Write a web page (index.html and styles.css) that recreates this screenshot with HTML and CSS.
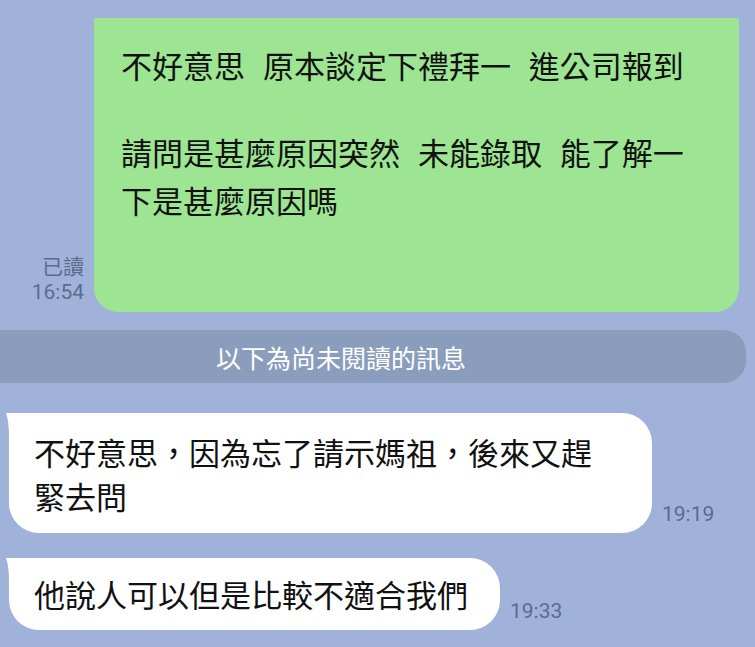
FILE: index.html
```html
<!DOCTYPE html>
<html lang="zh-Hant">
<head>
    <meta charset="UTF-8">
    <meta name="viewport" content="width=device-width, initial-scale=1.0">
    <title>聊天</title>
    <link rel="stylesheet" href="styles.css">
</head>
<body>
    <div class="chat">
        <div class="row row-out">
            <div class="meta meta-out">
                <span>已讀</span>
                <span>16:54</span>
            </div>
            <div class="bubble bubble-out">
                <p class="para para-first">不好意思  原本談定下禮拜一  進公司報到</p>
                <p class="para">請問是甚麼原因突然  未能錄取  能了解一<br>下是甚麼原因嗎</p>
            </div>
        </div>

        <div class="unread-bar">以下為尚未閱讀的訊息</div>

        <div class="row row-in">
            <div class="bubble bubble-in">不好意思，因為忘了請示媽祖，後來又趕緊去問</div>
            <div class="meta">19:19</div>
        </div>

        <div class="row row-in row-next">
            <div class="bubble bubble-in">他說人可以但是比較不適合我們</div>
            <div class="meta">19:33</div>
        </div>
    </div>
</body>
</html>
```

FILE: styles.css
```css
body {
    margin: 0;
    background: #a0b2da;
    font-family: Roboto, "Noto Sans CJK TC", sans-serif;
    height: 647px;
    overflow: hidden;
}

.chat {
    display: flex;
    flex-direction: column;
    padding-top: 18px;
}

.row {
    display: flex;
    align-items: flex-end;
    gap: 10px;
}

.row-out {
    justify-content: flex-end;
    padding-right: 16px;
}

.row-in {
    padding-left: 9px;
}

.row-next {
    margin-top: 25px;
}

.bubble {
    box-sizing: border-box;
    font-family: "Noto Sans CJK TC", sans-serif;
    font-size: 31px;
    color: #111;
}

/* my own message */
.bubble-out {
    width: 645px;
    padding: 23px 28px 88px 27px;
    background: #9de592;
    border-radius: 3px 3px 24px 24px;
}

.para {
    margin: 0;
    line-height: 48px;
    white-space: pre-wrap;
    word-spacing: 2px;
}

.para-first {
    margin-bottom: 39px;
}

/* incoming messages */
.bubble-in {
    position: relative;
    max-width: 643px;
    padding: 17px 32px 15px 25px;
    line-height: 44px;
    background: #fff;
    border-radius: 16px 30px 30px 30px;
}

.row-next .bubble-in {
    padding-top: 14px;
    padding-bottom: 14px;
}

.bubble-in::before {
    content: "";
    position: absolute;
    top: 0;
    left: -3px;
    width: 20px;
    height: 24px;
    background: #fff;
    clip-path: path('M0 0 L20 0 L20 24 L3 24 Q3 8 0 0 Z');
}

.meta {
    font-size: 21px;
    line-height: 25px;
    color: #5d6b8a;
    margin-bottom: 6px;
    white-space: nowrap;
}

.meta-out {
    display: flex;
    flex-direction: column;
    align-items: flex-end;
    margin-bottom: 7px;
}

.unread-bar {
    margin: 18px 9px 30px 0;
    padding: 2px 64px 0 0;
    height: 51px;
    line-height: 51px;
    background: #8b9dbd;
    border-radius: 0 22px 22px 0;
    color: #fff;
    font-family: "Noto Sans CJK TC", sans-serif;
    font-size: 25px;
    text-align: center;
}
```
